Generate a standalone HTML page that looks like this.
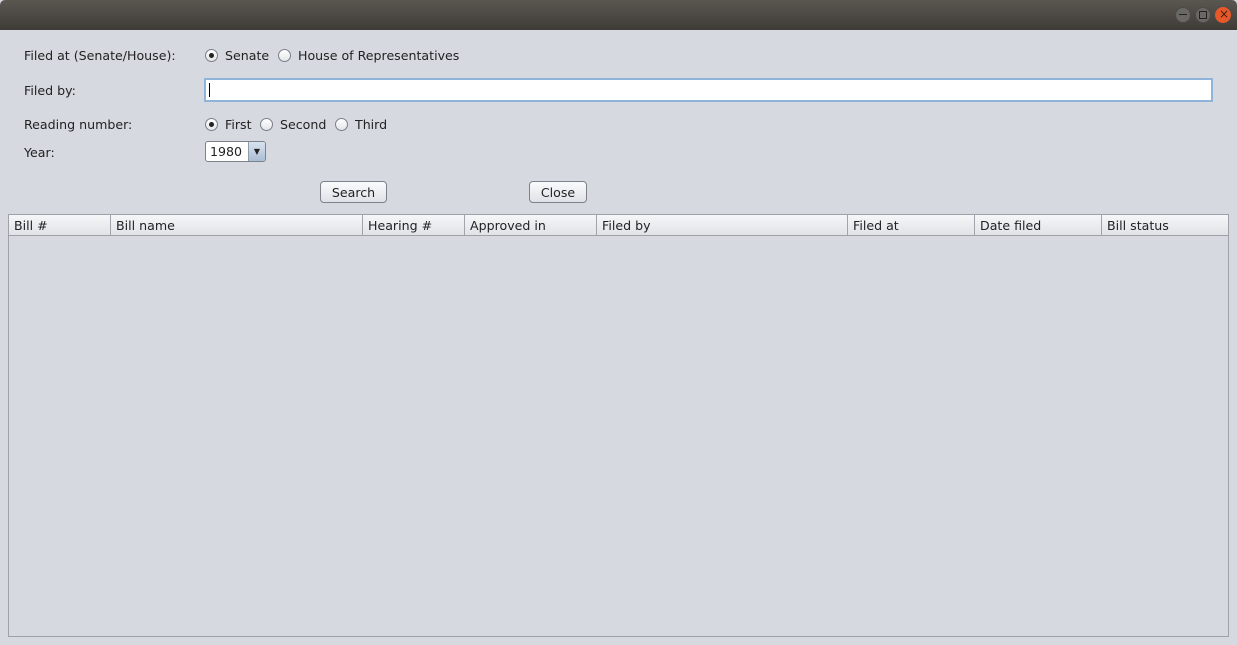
<!DOCTYPE html>
<html><head><style>
body{margin:0;width:1237px;height:645px;background:#d6d9e0;font-family:"DejaVu Sans",sans-serif;font-size:12.6px;color:#222;position:relative;overflow:hidden}
.a{position:absolute;white-space:nowrap}
.title{position:absolute;left:0;top:0;width:1237px;height:30px;background:linear-gradient(#5a5650,#3f3c38);border-radius:5px 5px 0 0}
.wb{position:absolute;top:7px;width:16px;height:16px;border-radius:50%;background:#6a6864;box-shadow:inset 0 0 0 1px #4a4845}
.r{position:absolute;width:11px;height:11px;border-radius:50%;border:1px solid #7a7f87;background:linear-gradient(#fff,#e3e5e9)}
.r.on::after{content:"";position:absolute;left:3px;top:3px;width:5px;height:5px;border-radius:50%;background:#222}
.btn{position:absolute;height:22px;border:1px solid #7d828a;border-radius:4px;background:linear-gradient(#fafbfc,#dfe2e7);text-align:center;line-height:22px;box-sizing:border-box}
.th{position:absolute;top:215px;height:20px;line-height:21px;padding-left:5px;border-right:1px solid #a0a4ab;box-sizing:border-box}
</style></head><body>
<div class="title"></div>
<div class="wb" style="left:1175px"><div style="position:absolute;left:4px;top:7px;width:8px;height:1px;background:#222"></div></div>
<div class="wb" style="left:1195px"><div style="position:absolute;left:4px;top:4px;width:6px;height:6px;border:1px solid #222"></div></div>
<div class="wb" style="left:1215px;background:#e5582a;box-shadow:none"><div class="a" style="left:4px;top:0px;font-size:12px;color:#4a1a08">×</div></div>

<div class="a" style="left:24px;top:48px">Filed at (Senate/House):</div>
<div class="r on" style="left:205px;top:49px"></div><div class="a" style="left:225px;top:48px">Senate</div>
<div class="r" style="left:278px;top:49px"></div><div class="a" style="left:298px;top:48px">House of Representatives</div>

<div class="a" style="left:24px;top:83px">Filed by:</div>
<div style="position:absolute;left:204px;top:78px;width:1009px;height:24px;box-sizing:border-box;border:2px solid #8fb3d9;background:#fff"><div style="position:absolute;left:3px;top:3px;width:1px;height:14px;background:#000"></div></div>

<div class="a" style="left:24px;top:117px">Reading number:</div>
<div class="r on" style="left:205px;top:118px"></div><div class="a" style="left:225px;top:117px">First</div>
<div class="r" style="left:260px;top:118px"></div><div class="a" style="left:280px;top:117px">Second</div>
<div class="r" style="left:335px;top:118px"></div><div class="a" style="left:355px;top:117px">Third</div>

<div class="a" style="left:24px;top:145px">Year:</div>
<div style="position:absolute;left:205px;top:141px;width:61px;height:21px;box-sizing:border-box;border:1px solid #7d828a;border-radius:3px;background:#fff;overflow:hidden">
<div class="a" style="left:4px;top:2px">1980</div>
<div style="position:absolute;right:0;top:0;width:16px;height:19px;background:linear-gradient(#d9e3ef,#a9bdd4);border-left:1px solid #8e9aa8;font-size:8px;text-align:center;line-height:19px">▼</div></div>

<div class="btn" style="left:320px;top:181px;width:67px">Search</div>
<div class="btn" style="left:529px;top:181px;width:58px">Close</div>

<div style="position:absolute;left:8px;top:214px;width:1221px;height:423px;box-sizing:border-box;border:1px solid #9ea2a8;background:#d6d9e0"></div>
<div style="position:absolute;left:9px;top:215px;width:1219px;height:21px;box-sizing:border-box;background:linear-gradient(#f6f7f8,#e1e3e7);border-bottom:1px solid #9ea2a8"></div>
<div class="th" style="left:9px;width:102px">Bill #</div>
<div class="th" style="left:111px;width:252px">Bill name</div>
<div class="th" style="left:363px;width:102px">Hearing #</div>
<div class="th" style="left:465px;width:132px">Approved in</div>
<div class="th" style="left:597px;width:251px">Filed by</div>
<div class="th" style="left:848px;width:127px">Filed at</div>
<div class="th" style="left:975px;width:127px">Date filed</div>
<div class="th" style="left:1102px;width:126px;border-right:none">Bill status</div>
</body></html>
